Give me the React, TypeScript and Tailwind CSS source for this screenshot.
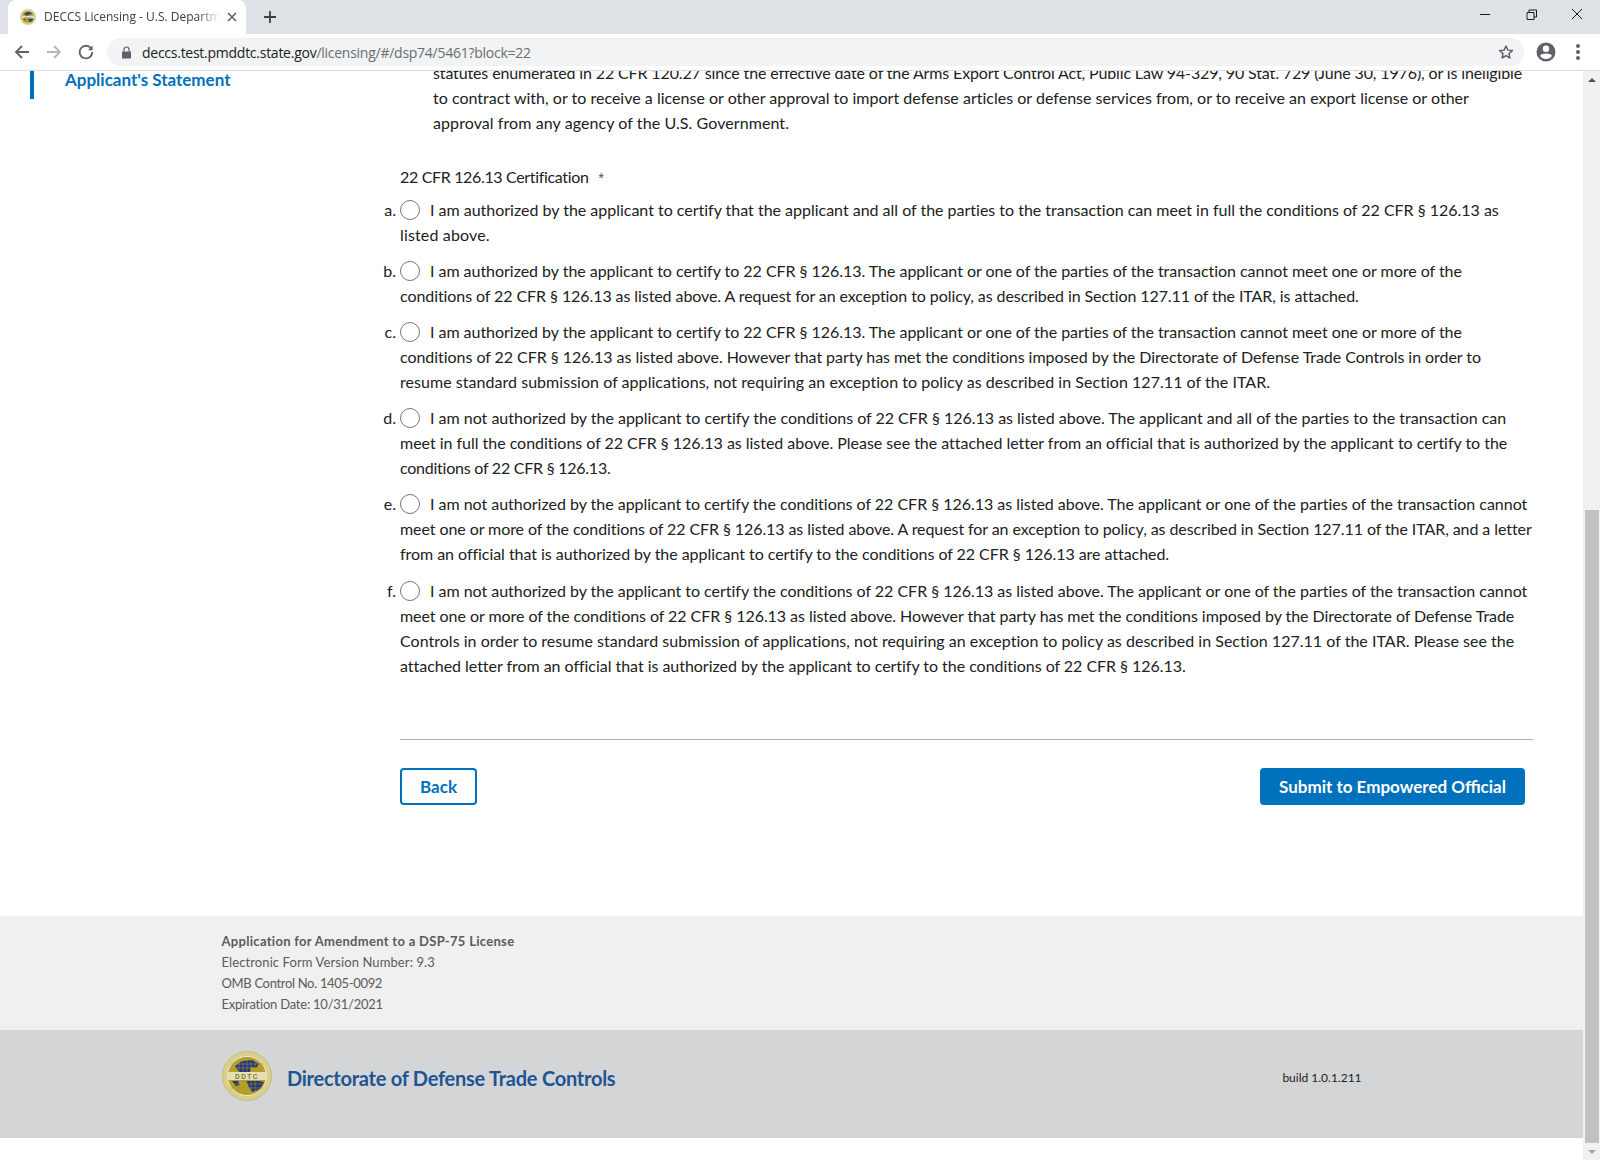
const bodyFont = "font-['Lato','Noto_Sans',sans-serif]";

function Seal({ size }: { size: number }) {
  return (
    <svg width={size} height={size} viewBox="0 0 50 50">
      <circle cx="25" cy="25" r="24.5" fill="#d9cf8c" stroke="#c4b86c" strokeWidth="0.8" />
      <circle cx="25" cy="25" r="19.5" fill="#b39f2c" stroke="#f0ead0" strokeWidth="1" />
      <path d="M13 15 L20 10 L30 9 L37 13 L34 17 L29 16 L28 21 L17 21 Z" fill="#24347e" />
      <path d="M24 30 L36 30 L42 31 L38 38 L30 41 L27 36 Z" fill="#24347e" />
      <path d="M10 30 L16 30 L18 34 L14 35 Z" fill="#24347e" />
      <path d="M17 8 V42 M21 6 V44 M25 6 V44 M29 6 V44 M33 8 V42 M8 13 H42 M8 17 H42 M8 33 H42 M8 37 H42" stroke="#b39f2c" strokeWidth="0.5" fill="none" />
      <rect x="5" y="21" width="40" height="8" fill="#e6dfae" />
      <text x="25" y="27.7" textAnchor="middle" fontSize="6.5" fontWeight="700" letterSpacing="1.5" fill="#7a7444" fontFamily="Liberation Sans, sans-serif">DDTC</text>
    </svg>
  );
}

// each line carries its own tracking so the breaks and line ends sit where the original's do
const options = [
  {
    key: "a.",
    lines: [
      { text: "I am authorized by the applicant to certify that the applicant and all of the parties to the transaction can meet in full the conditions of 22 CFR § 126.13 as", cls: "tracking-[-0.01px]" },
      { text: "listed above.", cls: "tracking-[0.15px]" },
    ],
  },
  {
    key: "b.",
    lines: [
      { text: "I am authorized by the applicant to certify to 22 CFR § 126.13. The applicant or one of the parties of the transaction cannot meet one or more of the", cls: "tracking-[-0.034px]" },
      { text: "conditions of 22 CFR § 126.13 as listed above. A request for an exception to policy, as described in Section 127.11 of the ITAR, is attached.", cls: "tracking-[-0.08px]" },
    ],
  },
  {
    key: "c.",
    lines: [
      { text: "I am authorized by the applicant to certify to 22 CFR § 126.13. The applicant or one of the parties of the transaction cannot meet one or more of the", cls: "tracking-[-0.034px]" },
      { text: "conditions of 22 CFR § 126.13 as listed above. However that party has met the conditions imposed by the Directorate of Defense Trade Controls in order to", cls: "tracking-[-0.046px]" },
      { text: "resume standard submission of applications, not requiring an exception to policy as described in Section 127.11 of the ITAR.", cls: "tracking-[0.04px]" },
    ],
  },
  {
    key: "d.",
    lines: [
      { text: "I am not authorized by the applicant to certify the conditions of 22 CFR § 126.13 as listed above. The applicant and all of the parties to the transaction can", cls: "tracking-[-0.01px]" },
      { text: "meet in full the conditions of 22 CFR § 126.13 as listed above. Please see the attached letter from an official that is authorized by the applicant to certify to the", cls: "tracking-[-0.025px]" },
      { text: "conditions of 22 CFR § 126.13.", cls: "tracking-[-0.24px]" },
    ],
  },
  {
    key: "e.",
    lines: [
      { text: "I am not authorized by the applicant to certify the conditions of 22 CFR § 126.13 as listed above. The applicant or one of the parties of the transaction cannot", cls: "tracking-[-0.02px]" },
      { text: "meet one or more of the conditions of 22 CFR § 126.13 as listed above. A request for an exception to policy, as described in Section 127.11 of the ITAR, and a letter", cls: "tracking-[-0.08px]" },
      { text: "from an official that is authorized by the applicant to certify to the conditions of 22 CFR § 126.13 are attached.", cls: "tracking-[-0.045px]" },
    ],
  },
  {
    key: "f.",
    lines: [
      { text: "I am not authorized by the applicant to certify the conditions of 22 CFR § 126.13 as listed above. The applicant or one of the parties of the transaction cannot", cls: "tracking-[-0.02px]" },
      { text: "meet one or more of the conditions of 22 CFR § 126.13 as listed above. However that party has met the conditions imposed by the Directorate of Defense Trade", cls: "tracking-[-0.05px]" },
      { text: "Controls in order to resume standard submission of applications, not requiring an exception to policy as described in Section 127.11 of the ITAR. Please see the", cls: "tracking-[0.025px]" },
      { text: "attached letter from an official that is authorized by the applicant to certify to the conditions of 22 CFR § 126.13.", cls: "tracking-[-0.035px]" },
    ],
  },
];

function BrowserChrome() {
  return (
    <div className="shrink-0 font-['Open_Sans',sans-serif]">
      <div className="flex h-[34px] bg-[#dee1e6]">
        <div className="ml-2 flex h-[34px] w-[238px] items-center rounded-t-lg bg-white pl-[12px] pr-[9px]">
          <Seal size={16} />
          <span className="ml-[8px] w-[176px] overflow-hidden whitespace-nowrap text-[12px] text-[#3c4043] [mask-image:linear-gradient(to_right,black_88%,transparent)]">
            DECCS Licensing - U.S. Department of State
          </span>
          <svg width="10" height="10" viewBox="0 0 10 10" className="ml-auto" stroke="#5f6368" strokeWidth="1.6">
            <path d="M1 1 L9 9 M9 1 L1 9" />
          </svg>
        </div>
        <svg width="14" height="14" viewBox="0 0 14 14" className="ml-[17px] mt-[10px]" stroke="#3c4043" strokeWidth="1.8">
          <path d="M7 1 V13 M1 7 H13" />
        </svg>
        <div className="ml-auto flex h-[30px] items-center">
          <svg width="46" height="30" viewBox="0 0 46 30" stroke="#1a1a1a" strokeWidth="1">
            <path d="M18 14.5 H28" />
          </svg>
          <svg width="46" height="30" viewBox="0 0 46 30" stroke="#1a1a1a" strokeWidth="1" fill="none">
            <path d="M21 12 V10 H28.5 V17 H26 M19 12.5 H26 V19.5 H19 Z" />
          </svg>
          <svg width="46" height="30" viewBox="0 0 46 30" stroke="#1a1a1a" strokeWidth="1">
            <path d="M18 9 L28 19 M28 9 L18 19" />
          </svg>
        </div>
      </div>
      <div className="flex h-[37px] items-center border-b border-[#dadce0] bg-white">
        <svg width="16" height="16" viewBox="0 0 16 16" className="ml-[14px]" fill="none" stroke="#5f6368" strokeWidth="1.8">
          <path d="M15 8 H2 M8 2 L2 8 L8 14" />
        </svg>
        <svg width="16" height="16" viewBox="0 0 16 16" className="ml-4" fill="none" stroke="#b4b6b9" strokeWidth="1.8">
          <path d="M1 8 H14 M8 2 L14 8 L8 14" />
        </svg>
        <svg width="16" height="16" viewBox="0 0 16 16" className="ml-[16px]" fill="none" stroke="#5f6368" strokeWidth="1.8">
          <path d="M13.5 5 A6.3 6.3 0 1 0 14.3 8" />
          <path d="M14.6 1.5 V6.2 H10 Z" fill="#5f6368" stroke="none" />
        </svg>
        <div className="ml-[13px] flex h-[28px] w-[1417px] items-center rounded-full bg-[#f1f3f4] pl-[14px] pr-[10px]">
          <svg width="11" height="13" viewBox="0 0 11 13" fill="#5f6368">
            <path d="M1 5.5 H10 V12.5 H1 Z" />
            <path d="M3 5.5 V3.5 A2.5 2.5 0 0 1 8 3.5 V5.5" fill="none" stroke="#5f6368" strokeWidth="1.2" />
          </svg>
          <span className="ml-[10px] whitespace-nowrap text-[14px] tracking-[-0.26px] text-[#202124]">
            deccs.test.pmddtc.state.gov<span className="text-[#6b6e72]">/licensing/#/dsp74/5461?block=22</span>
          </span>
          <svg width="16" height="16" viewBox="0 0 24 24" className="ml-auto" fill="none" stroke="#5f6368" strokeWidth="2.2" strokeLinejoin="round">
            <path d="M12 3 L14.8 9.2 L21.5 9.9 L16.5 14.4 L17.9 21 L12 17.6 L6.1 21 L7.5 14.4 L2.5 9.9 L9.2 9.2 Z" />
          </svg>
        </div>
        <svg width="20" height="20" viewBox="0 0 20 20" className="ml-[12px]" fill="#5f6368">
          <path d="M10 0.5 A9.5 9.5 0 1 0 10 19.5 A9.5 9.5 0 1 0 10 0.5 Z M10 3.6 A3.2 3.2 0 1 1 10 10 A3.2 3.2 0 1 1 10 3.6 Z M10 17 A7.4 7.4 0 0 1 4 13.8 C4.6 12.2 7.8 11.4 10 11.4 C12.2 11.4 15.4 12.2 16 13.8 A7.4 7.4 0 0 1 10 17 Z" fillRule="evenodd" />
        </svg>
        <div className="ml-[20px] flex flex-col gap-[2.5px]">
          <span className="size-[3.5px] rounded-full bg-[#5f6368]" />
          <span className="size-[3.5px] rounded-full bg-[#5f6368]" />
          <span className="size-[3.5px] rounded-full bg-[#5f6368]" />
        </div>
      </div>
    </div>
  );
}

function Scrollbar() {
  return (
    <div className="flex w-[17px] shrink-0 flex-col items-center bg-[#f1f1f1]">
      <div className="flex h-[17px] shrink-0 items-center justify-center">
        <div className="h-0 w-0 border-x-[4px] border-b-[4px] border-x-transparent border-b-[#505050]" />
      </div>
      <div className="mt-[422px] h-[633px] w-[14px] bg-[#c1c1c1]" />
      <div className="flex h-[17px] shrink-0 items-center justify-center">
        <div className="h-0 w-0 border-x-[4px] border-t-[4px] border-x-transparent border-t-[#a3a3a3]" />
      </div>
    </div>
  );
}

export default function App() {
  return (
    <div className={`flex h-[1160px] w-[1600px] flex-col overflow-hidden bg-white ${bodyFont}`}>
      <BrowserChrome />
      <div className="flex min-h-0 flex-1">
        <div className="flex min-w-0 flex-1 flex-col overflow-hidden">
          <div className="flex h-[845px] shrink-0">
            <aside className="w-[380px] shrink-0 pl-[30px]">
              <div className="h-[28px] border-l-[4px] border-[#0071bc] pl-[31px] text-[17px] font-bold leading-[17px] text-[#0071bc]">
                Applicant's Statement
              </div>
            </aside>
            <main className="w-[1153px] text-[16px] leading-[25px] text-[#212121]">
              <div className="-mt-[11px] pl-[53px]">
                <div className="whitespace-nowrap tracking-[-0.134px]">statutes enumerated in 22 CFR 120.27 since the effective date of the Arms Export Control Act, Public Law 94-329, 90 Stat. 729 (June 30, 1976), or is ineligible</div>
                <div className="whitespace-nowrap tracking-[0.013px]">to contract with, or to receive a license or other approval to import defense articles or defense services from, or to receive an export license or other</div>
                <div className="whitespace-nowrap tracking-[0.08px]">approval from any agency of the U.S. Government.</div>
              </div>
              <div className="mt-[29px] pl-[20px] tracking-[-0.34px]">
                22 CFR 126.13 Certification <span className="ml-[6px] font-['Liberation_Sans',sans-serif] text-[15px] text-[#555]">*</span>
              </div>
              <div className="mt-[7px] flex flex-col gap-[11px]">
                {options.map((opt) => (
                  <div key={opt.key} className="grid grid-cols-[16px_1fr] gap-x-[4px] last:mt-[1px]">
                    <span className="text-right">{opt.key}</span>
                    <div>
                      {opt.lines.map((line, i) => (
                        <div key={i} className={`flex items-center whitespace-nowrap ${line.cls}`}>
                          {i === 0 && (
                            <span className="mr-[10px] size-[20px] shrink-0 rounded-full border border-[#757575] bg-white" />
                          )}
                          {line.text}
                        </div>
                      ))}
                    </div>
                  </div>
                ))}
              </div>
              <div className="ml-[20px] mt-[61px] border-t border-[#aeaeae]" />
              <div className="ml-[20px] mr-[8px] mt-[28px] flex justify-between">
                <button className="h-[37px] w-[77px] rounded-[4px] border-2 border-[#0071bc] pb-[1px] text-[17px] font-bold text-[#0071bc]">
                  Back
                </button>
                <button className="h-[37px] w-[265px] rounded-[4px] bg-[#0071bc] pb-[1px] text-[17px] font-bold text-white">
                  Submit to Empowered Official
                </button>
              </div>
            </main>
          </div>
          <footer className="h-[114px] shrink-0 bg-[#f0f0f0] pl-[221.5px] pt-[15px] text-[13px] leading-[21px] text-[#5b5b5b]">
            <div className="font-bold tracking-[0.3px]">Application for Amendment to a DSP-75 License</div>
            <div className="tracking-[0.1px]">Electronic Form Version Number: 9.3</div>
            <div className="tracking-[-0.33px]">OMB Control No. 1405-0092</div>
            <div className="tracking-[-0.22px]">Expiration Date: 10/31/2021</div>
          </footer>
          <div className="flex h-[108px] shrink-0 items-start bg-[#d4d5d7] pl-[222px] pt-[21px]">
            <Seal size={50} />
            <span className="ml-[15px] mt-[15px] text-[20px] font-bold leading-[24px] tracking-[-0.25px] text-[#205493]">
              Directorate of Defense Trade Controls
            </span>
            <span className="ml-[667px] mt-[18px] text-[12px] text-[#212121]">build 1.0.1.211</span>
          </div>
        </div>
        <Scrollbar />
      </div>
    </div>
  );
}
